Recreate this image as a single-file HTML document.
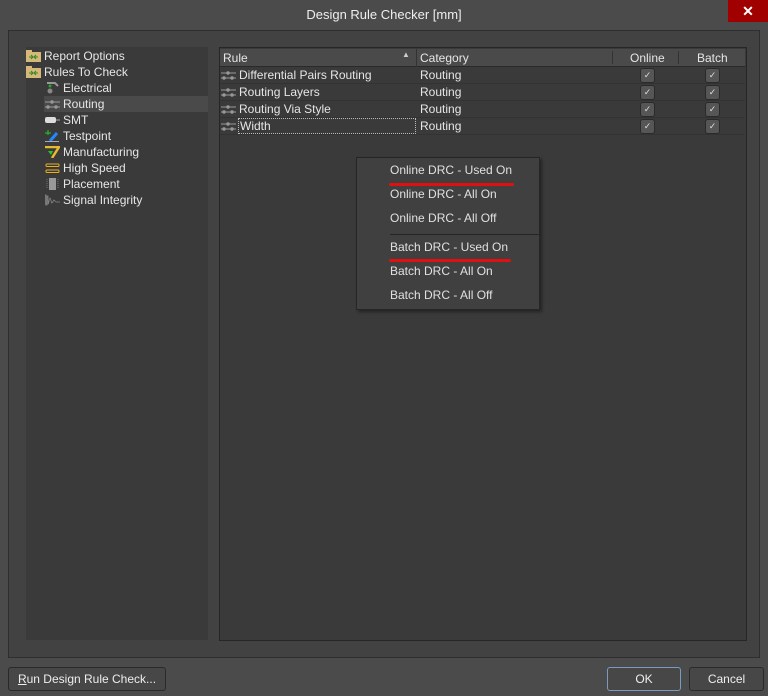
<!DOCTYPE html>
<html><head><meta charset="utf-8"><style>
*{margin:0;padding:0;box-sizing:border-box}
body{width:768px;height:696px;background:#4b4b4b;font-family:"Liberation Sans",sans-serif;font-size:12px;color:#e6e6e6;position:relative;overflow:hidden}
.abs{position:absolute}
.title{left:0;top:0;width:768px;height:30px;text-align:center;line-height:30px;font-size:13px;color:#eee}
.close{left:728px;top:0;width:40px;height:22px;background:#a00000;color:#fff;text-align:center;line-height:22px;font-size:14px;font-weight:bold}
.panel{left:8px;top:30px;width:752px;height:628px;background:#424242;border:1px solid #2e2e2e}
.tree{left:26px;top:47px;width:182px;height:593px;background:#3a3a3a}
.ti{position:absolute;height:16px;line-height:16px;white-space:nowrap}
.grid{left:219px;top:47px;width:528px;height:594px;background:#3a3a3a;border:1px solid #262626}
.hdr{position:absolute;left:0;top:1px;width:525px;height:18px;background:#4a4a4a;border-bottom:1px solid #2a2a2a}
.hdr span{position:absolute;top:2px}
.row{position:absolute;left:0;width:525px;height:17px;border-bottom:1px solid #333;line-height:16px}
.row span{position:absolute}
.cb{position:absolute;top:1px;width:15px;height:15px;background:#565656;border:1px solid #2a2a2a;border-radius:3px;color:#ddd;font-size:9px;text-align:center;line-height:13px}
.menu{left:356px;top:157px;width:184px;height:153px;background:#404040;border:1px solid #262626;box-shadow:2px 2px 3px rgba(0,0,0,.4)}
.mi{position:absolute;left:33px;font-size:12px;color:#e0e0e0}
.red{position:absolute;height:3px;background:#e01010;border-radius:2px}
.btn{position:absolute;top:667px;height:24px;border:1px solid #2a2a2a;border-radius:3px;background:#474747;text-align:center;line-height:22px;color:#eee}
.ic{position:absolute;left:-18px;top:2px;width:15px;height:12px}
</style></head><body>
<div class="abs title">Design Rule Checker [mm]</div>
<div class="abs close">✕</div>
<div class="abs panel"></div>
<div class="abs tree">
 <div class="ti" style="left:18px;top:1px"><svg class="ic" viewBox="0 0 15 12"><rect x="0" y="2" width="15" height="10" fill="#d8b878"/><rect x="0" y="0" width="6" height="3" fill="#d8b878"/><path d="M3 7h4M5 5l2 2-2 2M12 7H8M10 5L8 7l2 2" stroke="#2a8a2a" fill="none"/></svg>Report Options</div>
 <div class="ti" style="left:18px;top:17px"><svg class="ic" viewBox="0 0 15 12"><rect x="0" y="2" width="15" height="10" fill="#d8b878"/><rect x="0" y="0" width="6" height="3" fill="#d8b878"/><path d="M3 7h4M5 5l2 2-2 2M12 7H8M10 5L8 7l2 2" stroke="#2a8a2a" fill="none"/></svg>Rules To Check</div>
 <div class="ti" style="left:37px;top:33px"><svg class="ic" viewBox="0 0 15 12"><path d="M2 1h8l3 3" stroke="#999" stroke-width="2" fill="none"/><circle cx="5" cy="9" r="2.5" fill="#888"/><circle cx="5" cy="4" r="1.5" fill="#2a2"/></svg>Electrical</div>
 <div class="ti" style="left:18px;top:49px;width:164px;background:#4a4a4a;padding-left:19px"><svg class="ic" style="left:1px" viewBox="0 0 15 12"><path d="M0 4h15M0 9h15" stroke="#999"/><circle cx="7" cy="4" r="1.7" fill="#999"/><circle cx="3" cy="9" r="1.7" fill="#999"/><circle cx="11" cy="9" r="1.7" fill="#999"/></svg>Routing</div>
 <div class="ti" style="left:37px;top:65px"><svg class="ic" viewBox="0 0 15 12"><rect x="0" y="3" width="11" height="6" rx="2" fill="#ddd"/><path d="M11 6h4" stroke="#aaa"/></svg>SMT</div>
 <div class="ti" style="left:37px;top:81px"><svg class="ic" viewBox="0 0 15 12"><path d="M3 0v5M0 3h6" stroke="#2c2"/><path d="M5 11L12 3" stroke="#28f" stroke-width="3"/><path d="M0 11.5h14" stroke="#aaa"/></svg>Testpoint</div>
 <div class="ti" style="left:37px;top:97px"><svg class="ic" viewBox="0 0 15 12"><path d="M0 1h14l-7 11" stroke="#e8b830" stroke-width="2.5" fill="none"/><path d="M3 5h5l-2 4z" fill="#2c2"/></svg>Manufacturing</div>
 <div class="ti" style="left:37px;top:113px"><svg class="ic" viewBox="0 0 15 12"><rect x="1" y="2" width="13" height="2.5" rx="1" fill="none" stroke="#e8b020"/><rect x="1" y="8" width="13" height="2.5" rx="1" fill="none" stroke="#e8b020"/></svg>High Speed</div>
 <div class="ti" style="left:37px;top:129px"><svg class="ic" viewBox="0 0 15 12"><rect x="4" y="0" width="7" height="12" fill="#999"/><path d="M2 1v10M13 1v10" stroke="#777" stroke-dasharray="1 1"/></svg>Placement</div>
 <div class="ti" style="left:37px;top:145px"><svg class="ic" viewBox="0 0 15 12"><path d="M0 11V1h1v10h1V2h1v8c1 0 1-6 2-6s1 5 2 5 1-3 2-3 1 2 2 2h4" stroke="#888" fill="none" stroke-width=".8"/></svg>Signal Integrity</div>
</div>
<div class="abs grid">
 <div class="hdr"><span style="left:3px">Rule</span><span style="left:182px;top:1px;font-size:8px;color:#ccc">▲</span><span style="left:196px;top:0;height:18px;border-left:1px solid #333"></span><span style="left:200px">Category</span><span style="left:392px;top:2px;height:13px;border-left:1px solid #333"></span><span style="left:410px">Online</span><span style="left:458px;top:2px;height:13px;border-left:1px solid #333"></span><span style="left:477px">Batch</span></div>
 <div class="row" style="top:19px"><svg class="ic" style="left:1px;top:2px" viewBox="0 0 15 12"><path d="M0 4h15M0 9h15" stroke="#999"/><circle cx="7" cy="4" r="1.7" fill="#999"/><circle cx="3" cy="9" r="1.7" fill="#999"/><circle cx="11" cy="9" r="1.7" fill="#999"/></svg><span style="left:19px">Differential Pairs Routing</span><span style="left:200px">Routing</span><div class="cb" style="left:420px">✓</div><div class="cb" style="left:485px">✓</div></div>
 <div class="row" style="top:36px"><svg class="ic" style="left:1px;top:2px" viewBox="0 0 15 12"><path d="M0 4h15M0 9h15" stroke="#999"/><circle cx="7" cy="4" r="1.7" fill="#999"/><circle cx="3" cy="9" r="1.7" fill="#999"/><circle cx="11" cy="9" r="1.7" fill="#999"/></svg><span style="left:19px">Routing Layers</span><span style="left:200px">Routing</span><div class="cb" style="left:420px">✓</div><div class="cb" style="left:485px">✓</div></div>
 <div class="row" style="top:53px"><svg class="ic" style="left:1px;top:2px" viewBox="0 0 15 12"><path d="M0 4h15M0 9h15" stroke="#999"/><circle cx="7" cy="4" r="1.7" fill="#999"/><circle cx="3" cy="9" r="1.7" fill="#999"/><circle cx="11" cy="9" r="1.7" fill="#999"/></svg><span style="left:19px">Routing Via Style</span><span style="left:200px">Routing</span><div class="cb" style="left:420px">✓</div><div class="cb" style="left:485px">✓</div></div>
 <div class="row" style="top:70px"><svg class="ic" style="left:1px;top:2px" viewBox="0 0 15 12"><path d="M0 4h15M0 9h15" stroke="#999"/><circle cx="7" cy="4" r="1.7" fill="#999"/><circle cx="3" cy="9" r="1.7" fill="#999"/><circle cx="11" cy="9" r="1.7" fill="#999"/></svg><span style="left:18px;top:0;width:178px;height:16px;border:1px dotted #bbb;padding-left:1px;line-height:14px">Width</span><span style="left:200px">Routing</span><div class="cb" style="left:420px">✓</div><div class="cb" style="left:485px">✓</div></div>
</div>
<div class="abs menu">
 <div class="mi" style="top:5px">Online DRC - Used On</div>
 <div class="red" style="left:32px;top:25px;width:125px"></div>
 <div class="mi" style="top:29px">Online DRC - All On</div>
 <div class="mi" style="top:53px">Online DRC - All Off</div>
 <div style="position:absolute;left:33px;top:76px;width:150px;border-top:1px solid #262626"></div>
 <div class="mi" style="top:82px">Batch DRC - Used On</div>
 <div class="red" style="left:32px;top:101px;width:122px"></div>
 <div class="mi" style="top:106px">Batch DRC - All On</div>
 <div class="mi" style="top:130px">Batch DRC - All Off</div>
</div>
<div class="btn" style="left:8px;width:158px"><u>R</u>un Design Rule Check...</div>
<div class="btn" style="left:607px;width:74px;border-color:#7a9ac0">OK</div>
<div class="btn" style="left:689px;width:75px">Cancel</div>
</body></html>
